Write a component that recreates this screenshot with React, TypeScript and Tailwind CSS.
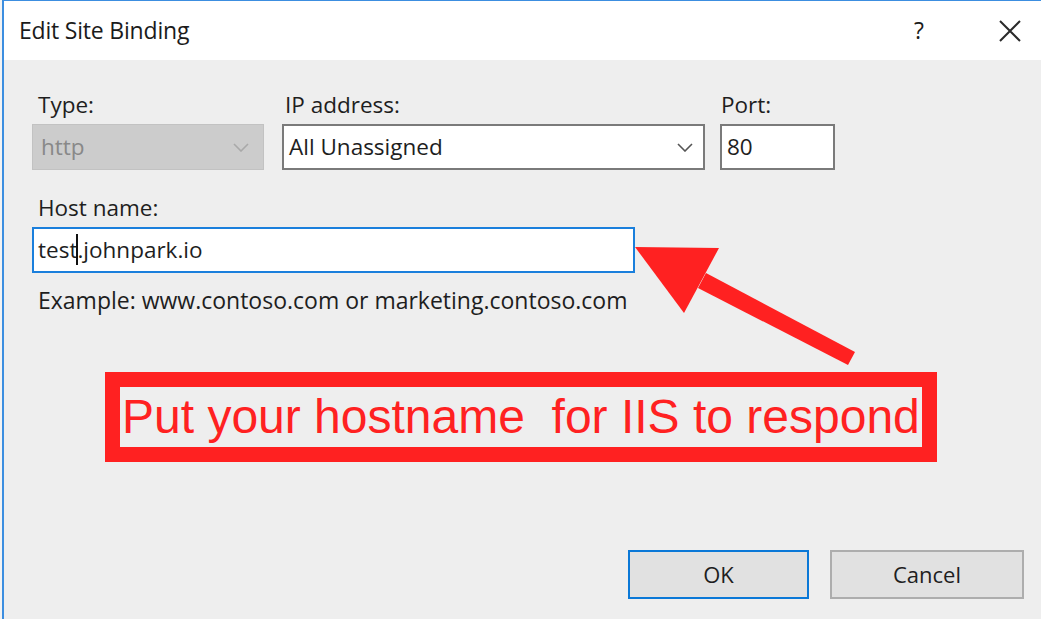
import React from 'react';

const ui = "font-['Open_Sans','Noto_Sans',sans-serif]";

function Chevron({ className }: { className?: string }) {
  return (
    <svg width="16" height="9" viewBox="0 0 16 9" className={className}>
      <path d="M1 1 L8 8 L15 1" fill="none" stroke="currentColor" strokeWidth="1.6" />
    </svg>
  );
}

export default function App() {
  return (
    <div className={`relative w-[1041px] h-[619px] overflow-hidden bg-white flex ${ui}`}>
      <div className="w-[2px] shrink-0 bg-[#f3f3f3]" />
      {/* dialog */}
      <div className="flex-1 flex flex-col border-l-2 border-t border-[#3c8ee0]">
        {/* title bar */}
        <div className="h-[59px] bg-white flex items-center pl-[15px] pr-[20px] shrink-0">
          <span className="text-[23px] text-[#1b1b1b] tracking-[-0.2px]">Edit Site Binding</span>
          <span className="ml-auto text-[23px] text-[#1b1b1b] mr-[75px]">?</span>
          <svg width="22" height="22" viewBox="0 0 22 22" className="text-[#2a2a2a]">
            <path d="M1 1 L21 21 M21 1 L1 21" stroke="currentColor" strokeWidth="2" />
          </svg>
        </div>

        {/* body */}
        <div className="flex-1 bg-[#eeeeee] pl-[28px] pr-[17px] pt-[30px] flex flex-col text-[22.5px] text-[#1e1e1e]">
          <div className="flex gap-[18px]">
            <div className="w-[232px] flex flex-col">
              <span className="pl-[6px] h-[34px] leading-[30px]">Type:</span>
              <div className="h-[46px] bg-[#cccccc] border border-[#c2c2c2] flex items-center pl-[8px] pr-[14px] text-[#888888]">
                <span>http</span>
                <Chevron className="ml-auto text-[#a9a9a9]" />
              </div>
            </div>
            <div className="w-[423px] flex flex-col">
              <span className="pl-[3px] h-[34px] leading-[30px]">IP address:</span>
              <div className="h-[46px] bg-white border-2 border-[#7a7a7a] flex items-center pl-[5px] pr-[10px]">
                <span>All Unassigned</span>
                <Chevron className="ml-auto text-[#555555]" />
              </div>
            </div>
            <div className="w-[115px] flex flex-col -ml-[3px]">
              <span className="pl-[1px] h-[34px] leading-[30px]">Port:</span>
              <div className="h-[46px] bg-white border-2 border-[#7a7a7a] flex items-center pl-[5px]">
                <span>80</span>
              </div>
            </div>
          </div>

          <span className="pl-[6px] mt-[23px] h-[34px] leading-[30px]">Host name:</span>
          <div className="w-[603px] h-[46px] bg-white border-2 border-[#1a7fdc] flex items-center pl-[4px]">
            <span>test</span>
            <span className="relative w-0 h-full">
              <span className="absolute left-[-1px] top-[5px] w-[2px] h-[31px] bg-[#111]" />
            </span>
            <span>.johnpark.io</span>
          </div>
          <span className="pl-[6px] mt-[12px] leading-[30px] text-[23px]">Example: www.contoso.com or marketing.contoso.com</span>

          <div className="mt-auto mb-[20px] flex justify-end gap-[21px]">
            <button className="w-[181px] h-[49px] bg-[#e1e1e1] border-2 border-[#0a78d7] text-[22px] text-[#1e1e1e]">OK</button>
            <button className="w-[194px] h-[49px] bg-[#e1e1e1] border-2 border-[#adadad] text-[22px] text-[#1e1e1e]">Cancel</button>
          </div>
        </div>
      </div>

      {/* annotation overlay */}
      <svg className="absolute left-0 top-0 pointer-events-none" width="1041" height="619">
        <polygon points="635,247 719,248 684,313" fill="#ff2121" />
        <polygon points="706,273 855,352 848,365 698,288" fill="#ff2121" />
      </svg>
      <div className="absolute left-[105px] top-[372px] w-[832px] h-[90px] border-[15px] border-[#ff2121] flex items-center pl-[2px] overflow-hidden">
        <span className="font-['Liberation_Sans',Arial,sans-serif] text-[48px] leading-none text-[#ff2121] whitespace-pre">Put your hostname  for IIS to respond</span>
      </div>
    </div>
  );
}
